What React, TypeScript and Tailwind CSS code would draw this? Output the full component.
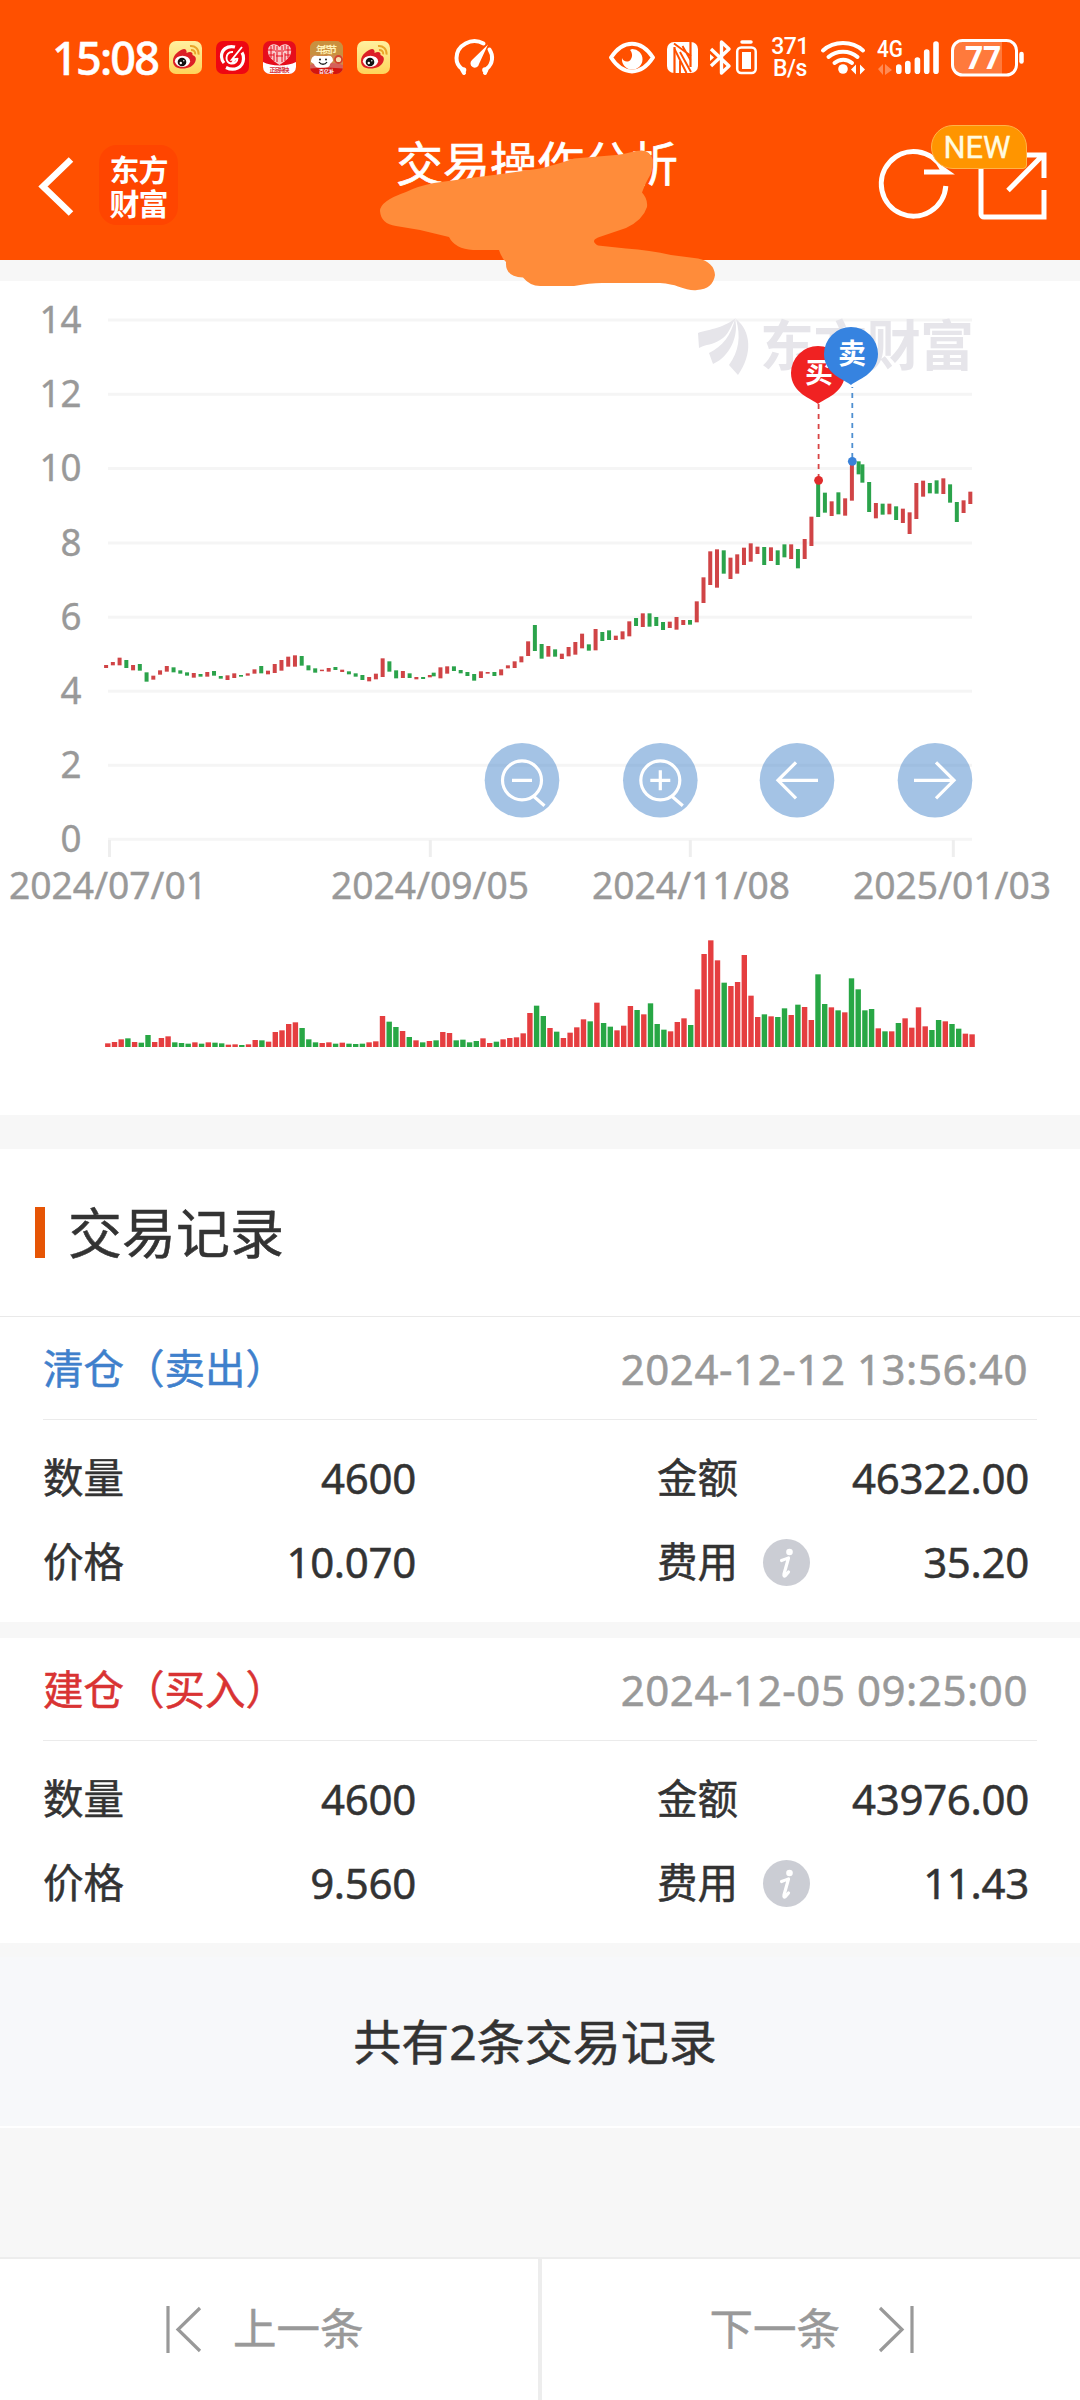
import React from "react";

/* Candles: colour, top, bottom (px inside the chart area) */
const CANDLES_A =
  "r195-204 r186-196 r173-196 g180-204 r195-211 g192-212 g217-245 r227-239 r211-224 r198-215 g202-217 g211-221 g217-227 r219-233 g222-230 r216-230 g213-227 g228-236 r226-240 r220-234 g225-230 r220-227 r208-221 g198-220 r212-223 r192-219 r180-212 r170-200 r166-200 g168-197 g196-211 g205-218 r209-212 r204-215 g201-210 r209-216 g214-223 g220-230 g225-240 r231-244 r221-238 r175-231 g184-215 g211-235 r213-234 g220-234 r231-238 g231-237 r225-232";
const CANDLES_B =
  "g458-469 r442-475 r439-461 g439-453 g450-460 g456-468 g462-482 r454-474 r456-461 g456-468 r448-466 r436-445 r424-444 r409-427 r364-408 g315-393 g372-416 r378-410 g388-410 r401-417 r381-409 r366-404 r341-385 g373-392 r327-391 g336-363 g331-360 r347-360 r334-358 r304-349 g294-318 r280-321 g280-320 g291-318 g306-330 r305-324 r291-329 r300-315 g300-314 r244-307 r172-249 r94-195 r88-203 g91-161";
const CANDLES_C =
  "r773-837 r763-821 r743-795 r730-785 r740-762 g741-795 r742-783 g751-795 g733-772 r733-777 g747-805 r717-777 r650-738 g545-651 g578-638 r604-648 g577-643 r595-647 r485-602 g484-523";
const CANDLES_D =
  "g493-548 g546-636 r609-655 g611-644 r611-643 g619-660 r626-669 r637-702 r549-657 r542-590 g549-580 g541-581 r535-582 g553-608 g606-666 r601-639 r575-612";

const SEGMENTS = [
  { x: 106.1, y: 600, data: CANDLES_A },
  { x: 433.7, y: 520, data: CANDLES_B },
  { x: 433.7 + 44 * 6.745, y: 300, data: CANDLES_C },
  { x: 862.4, y: 300, data: CANDLES_D },
];

const candles = SEGMENTS.flatMap((s) =>
  s.data.split(" ").map((c, i) => {
    const [top, bottom] = c.slice(1).split("-").map(Number);
    return {
      up: c[0] === "r",
      x: s.x + i * 6.745,
      y: s.y + top / 3,
      h: Math.max(1.5, (bottom - top) / 3),
    };
  })
);

const VOLUME_TOPS = [
  370, 366, 358, 355, 366, 368, 345, 366, 354, 349, 367, 369, 371, 367, 371, 367, 368, 370, 374, 373,
  375, 373, 360, 361, 365, 336, 331, 312, 307, 324, 358, 367, 369, 367, 371, 368, 371, 372, 371, 367,
  364, 288, 305, 321, 333, 351, 361, 367, 363, 361, 336, 339, 361, 359, 367, 363, 355, 369, 365, 358,
  354, 352, 340, 279, 257, 288, 324, 335, 354, 338, 322, 298, 304, 248, 309, 320, 331, 317, 258, 270,
  283, 250, 312, 329, 334, 306, 295, 315, 208, 102, 61, 121, 188, 198, 186, 105, 227, 291, 283, 289,
  291, 265, 285, 254, 261, 300, 163, 252, 262, 271, 277, 175, 208, 271, 267, 325, 334, 334, 309, 295,
  323, 262, 319, 330, 300, 304, 312, 326, 341, 343,
];

const GRID = [320, 394.3, 468.5, 543, 617.2, 691.2, 765.3, 839.3];
const RED = "#d04446";
const GREEN = "#2ba34b";
const GREY_TEXT = "#999999";

const latin = "'Noto Sans', 'Noto Sans CJK SC', sans-serif";

function Icon({
  x,
  y,
  w,
  h,
  className = "",
  children,
}: {
  x: number;
  y: number;
  w: number;
  h: number;
  className?: string;
  children: React.ReactNode;
}) {
  return (
    <svg
      width={w}
      height={h}
      viewBox={`${x} ${y} ${w} ${h}`}
      className={`block shrink-0 overflow-visible ${className}`}
      fill="none"
      stroke="none"
    >
      {children}
    </svg>
  );
}

function Weibo() {
  return (
    <Icon x={0} y={0} w={33} h={33}>
      <defs>
        <linearGradient id="wb" x1="0" y1="0" x2="0" y2="1">
          <stop offset="0" stopColor="#fff0a0" />
          <stop offset="1" stopColor="#ffd45a" />
        </linearGradient>
      </defs>
      <rect width="33" height="33" rx="7" fill="url(#wb)" />
      <path
        d="M4 20C4 14 10 9 15 8c2 0 3 2 2.500 4 3-1.500 6.500-1.500 6 2 3 1 4 3 3 6-1.500 5-7 7.500-13 7.500S4 25 4 20z"
        fill="#dc1f26"
      />
      <ellipse cx="13.500" cy="20.300" rx="7.600" ry="5.600" fill="#fff" />
      <circle cx="13" cy="21" r="4.300" fill="#111" />
      <circle cx="11.800" cy="22" r="1.200" fill="#fff" />
      <circle cx="14.800" cy="19.800" r=".7" fill="#fff" />
      <path d="M21 5c5-.6 9 3 8.600 8.600M22 9c2.500-.2 4.500 1.500 4.200 4.300" stroke="#eaa52a" strokeWidth="1.900" />
    </Icon>
  );
}

function AppIcons() {
  return (
    <div className="ml-3 flex items-center gap-[14px]">
      <Weibo />
      <Icon x={0} y={0} w={33} h={33}>
        <rect width="33" height="33" rx="7" fill="#ee0712" />
        <path d="M19 6C11 4 5 9 5.500 16c.2 2.500 1.200 4.500 2.500 6M10 26.500c8 4 17 .5 17.500-8.500.2-3-.5-5-1.500-6.500" stroke="#fff" strokeWidth="3.200" />
        <path d="M17 11c-4.500-.5-6.500 3-6.500 6 0 3 2 5 4.500 5.500 4 .5 6.500-2 6.500-5.500M26 6L16 18.500l3.500-.5-4 4.500" stroke="#fff" strokeWidth="1.900" />
      </Icon>
      <Icon x={0} y={0} w={33} h={33}>
        <clipPath id="heart-app">
          <rect width="33" height="33" rx="7" />
        </clipPath>
        <g clipPath="url(#heart-app)">
          <rect width="33" height="33" fill="#e60d1c" />
          <path d="M0 21c8 4.500 25 4.500 33 0v12H0z" fill="#fff" />
          <path d="M16.500 24C8 19 4 14 5 8.500 6 3 13 1.500 16.500 6 20 1.500 27 3 28 8.500 29 14 25 19 16.500 24z" fill="#f9c9cb" />
          <path
            d="M8 5v12M11 4v6M11 12v8M14 5v4M14 11v10M19 5v4M19 11v10M22 4v6M22 12v8M25 5v12M5 9h5M12 10h9M23 9h5M6 14h5M13 15h7M22 14h5"
            stroke="#e60d1c"
            strokeWidth="1"
          />
          <text x="16.500" y="30.500" fontSize="6" fontWeight="700" textAnchor="middle" fill="#d6333c" fontFamily={latin} textLength="20">
            正品特快
          </text>
        </g>
      </Icon>
      <Icon x={0} y={0} w={33} h={33}>
        <clipPath id="dog-app">
          <rect width="33" height="33" rx="7" />
        </clipPath>
        <g clipPath="url(#dog-app)">
          <rect width="33" height="33" fill="#cf8a4c" />
          <path d="M0 0h33v14H0z" fill="#c9903f" />
          <path d="M0 24c8-3 25-3 33 0v9H0z" fill="#d5605a" />
          <text x="16.500" y="11.500" fontSize="9.500" fontWeight="700" textAnchor="middle" fill="#fff2b8" fontFamily={latin} textLength="21">
            年货节
          </text>
          <path d="M1 21c0-5 3-7 6-6h10c4-1 6 1 6 5l-3 3c0 3-3 4-8 4s-7-1-8-4z" fill="#fff" />
          <circle cx="10" cy="18.500" r="1" fill="#222" />
          <circle cx="16" cy="18.500" r="1" fill="#222" />
          <path d="M9 21c2 3 6 3 8 0" stroke="#222" strokeWidth="1.300" />
          <circle cx="28.500" cy="18.500" r="3.500" fill="#f6dfb0" stroke="#d2422f" strokeWidth="1.800" />
          <path d="M0 27.500c9-1 24-1 33 0V33H0z" fill="#d3150f" />
          <text x="16.500" y="32.300" fontSize="5" fontWeight="700" textAnchor="middle" fill="#fff" fontFamily={latin} textLength="15">
            百亿补
          </text>
        </g>
      </Icon>
      <Weibo />
    </div>
  );
}

function StatusBar() {
  return (
    <div className="flex h-[115px] items-center pl-[52px] text-white">
      <span className="w-[105px] whitespace-nowrap font-['Noto_Sans'] text-[45px] font-medium leading-none tracking-[-1.8px] [-webkit-text-stroke:0.5px]">
        15:08
      </span>
      <AppIcons />
      <Icon x={454} y={40} w={41} h={35} className="ml-[64px]">
        <path d="M464 73l-2.500-4.500C457 65 456.500 61 456.500 58a18 17 0 0 1 27-14.500M489.500 49.500c4 6 3.500 14-2.500 19L485 73" stroke="#fff" strokeWidth="4" strokeLinecap="round" strokeLinejoin="round" />
        <circle cx="463.500" cy="70" r="2.800" fill="#fff" />
        <circle cx="485" cy="70" r="2.800" fill="#fff" />
        <path d="M472 60L488 44.500 479 64a4.300 4.300 0 1 1-7-4z" fill="#fff" />
      </Icon>

      <Icon x={609} y={40} w={46} h={35} className="ml-[114px]">
        <path d="M611 57.500C623 39 641 39 653 57.500 641 76 623 76 611 57.500z" stroke="#fff" strokeWidth="4" strokeLinejoin="round" />
        <path d="M632 49a10.300 10.300 0 1 1-10 9c1 4 7 5 9 1 2-3 1-7-1-9z" fill="#fff" />
      </Icon>
      <Icon x={667} y={40} w={31} h={35} className="ml-3">
        <rect x="667" y="42" width="31" height="31" rx="7" fill="#fff" />
        <path d="M674.500 47V73M690.500 42V67" stroke="#ff5000" strokeWidth="2.200" />
        <path d="M674 43.500L691 56M680 52l11 20M674.500 49l12 24M680 61v12M690.500 60l-8-14" stroke="#ff5000" strokeWidth="1.900" />
      </Icon>
      <Icon x={710} y={40} w={22} h={35} className="ml-3">
        <path d="M711 49l18 17-7.500 7V42l7.500 7-18 17" stroke="#fff" strokeWidth="3.400" strokeLinejoin="round" />
        <path d="M710 54l4 3.500-4 3.500z" fill="#fff" />
      </Icon>
      <Icon x={736} y={40} w={21} h={35} className="ml-1">
        <path d="M742 42h9" stroke="#fff" strokeWidth="3.500" strokeLinecap="round" />
        <rect x="737.200" y="47.500" width="18.500" height="25.500" rx="4" stroke="#fff" strokeWidth="2.500" />
        <rect x="742" y="52" width="9" height="17" fill="#fff" />
      </Icon>
      <div className="ml-[14px] flex w-[38px] flex-col items-center font-[Roboto] text-[23px] font-medium leading-[22px] tracking-[-0.5px]">
        <span>371</span>
        <span>B/s</span>
      </div>
      <Icon x={821} y={40} w={44} h={35} className="ml-3">
        <path d="M823 50.500c11-10 29-10 40 0M828.500 57c8-7 21-7 29 0M834.500 63c5-4.500 12.500-4.500 17.500 0" stroke="#fff" strokeWidth="4" strokeLinecap="round" />
        <circle cx="843" cy="69" r="4.800" fill="#fff" />
        <path d="M851 69.500l5-5v10zM865 69.500l-5-5v10z" fill="#fff" />
      </Icon>
      <Icon x={877} y={38} w={62} h={37} className="ml-3">
        <text x="877" y="56" fill="#fff" fontSize="23" fontWeight="500" fontFamily="Roboto" textLength="26" lengthAdjust="spacingAndGlyphs">
          4G
        </text>
        <path d="M878 68l5-5v11M885 63v11l7-5z" fill="#ff8a55" />
        <path d="M898.800 66v4.300M907.800 62.500v7.800M917.400 59v11.300M926.700 51v19.300M936 43v27.300" stroke="#fff" strokeWidth="5.600" strokeLinecap="round" />
      </Icon>
      <Icon x={951} y={38} w={74} h={37} className="ml-3">
        <path d="M961 41h41v32h-41a8 8 0 0 1-7-8V49a8 8 0 0 1 7-8z" fill="#ff7a3c" />
        <rect x="952.500" y="39.500" width="64" height="34.500" rx="10" stroke="#fff" strokeWidth="3" />
        <path d="M1021.500 53v7.500" stroke="#fff" strokeWidth="4.500" strokeLinecap="round" />
        <text x="965" y="68" fill="#fff" fontSize="32" fontWeight="700" fontFamily="'Noto Sans'" textLength="36" lengthAdjust="spacingAndGlyphs">
          77
        </text>
      </Icon>
    </div>
  );
}

function Header() {
  return (
    <header className="relative h-[260px] bg-[#ff5000]">
      <StatusBar />
      <div className="flex h-[145px] items-start pl-10">
        <Icon x={40} y={155} w={34} h={62} className="mt-10">
          <path d="M71 159.500L43 186.500 71 213.500" stroke="#fff" strokeWidth="6.500" />
        </Icon>
        <div className="ml-[25px] mt-[30px] flex h-20 w-[79px] flex-col items-center justify-center rounded-[18px] bg-[#ff4500] font-['Noto_Sans_CJK_SC'] text-[30px] font-bold leading-[34px] tracking-[-1px] text-white">
          <span>东方</span>
          <span>财富</span>
        </div>
        <h1 className="ml-[218px] mt-[12px] font-['Noto_Sans_CJK_SC'] text-[47px] font-normal leading-[68px] text-white [-webkit-text-stroke:0.7px]">
          交易操作分析
        </h1>
        <div className="relative ml-[201px] mt-[10px]">
          <Icon x={878} y={125} w={168} h={96}>
            <path d="M944.800 186A32.300 32.300 0 1 1 941 168.500L946 172H923" stroke="#fff" strokeWidth="5" />
            <path d="M1010 155h33v23M980 160v54a3 3 0 0 0 3 3h60v-27M1007 190.500L1042 155" stroke="#fff" strokeWidth="5" />
          </Icon>
          <span className="absolute left-[52px] top-0 flex h-11 w-[96px] items-center justify-center rounded-[22px] rounded-br-sm border border-[#ffb347] bg-[#ff9500] pr-1 font-[Roboto] text-[31px] leading-none text-[#fffbe0] [-webkit-text-stroke:0.3px]">
            NEW
          </span>
        </div>
      </div>
      <svg viewBox="370 140 360 160" width="360" height="160" className="absolute left-[370px] top-[140px] z-10">
        <path
          d="M540 168.500Q510 173 482 176.500T434 183Q418 186 406 192 380 201 380 211 381 224 396 226L420 230 449 237Q455 249 473 250H499Q502 259 506 262 505 277 523 277.500 530 286 540 286H574Q590 283 602 283H660Q672 284 678 286.500 690 291 697 290 713 289 715 275 714 262 698 258.500L671 255Q650 250 626 248.500L598 245.500Q590 241 598 237.500L626 228Q643 220 647 207 648 199 642 192.500 645 184 648 179 653 172 653 160 650 148 636 151 625 154 616 155L574 158.500Q555 165 540 168.500z"
          fill="#ff8c3a"
        />
      </svg>
    </header>
  );
}

function Pin({ x, y, color, label }: { x: number; y: number; color: string; label: string }) {
  return (
    <g>
      <path
        d={`M${x} ${y + 31}C${x - 6} ${y + 26} ${x - 27} ${y + 20} ${x - 27} ${y}A27 27 0 0 1 ${x + 27} ${y}C${x + 27} ${y + 20} ${x + 6} ${y + 26} ${x} ${y + 31}z`}
        fill={color}
      />
      <text x={x + 1} y={y + 10} fontSize="28" fontWeight="700" textAnchor="middle" fill="#fff" fontFamily="'Noto Sans CJK SC', sans-serif">
        {label}
      </text>
    </g>
  );
}

function RoundButton({ cx, children }: { cx: number; children: React.ReactNode }) {
  return (
    <g transform={`translate(${cx} 780.300)`} stroke="#fff" strokeWidth="3.200" fill="none">
      <circle r="37.300" fill="#4a88cc" fillOpacity=".5" stroke="none" />
      {children}
    </g>
  );
}

function Chart() {
  const dates = [
    { t: "2024/07/01", x: 9 },
    { t: "2024/09/05", x: 331 },
    { t: "2024/11/08", x: 592 },
    { t: "2025/01/03", x: 853 },
  ];
  return (
    <svg viewBox="0 281 1080 834" width="1080" height="834" className="block bg-white">
      {GRID.map((y) => (
        <rect key={y} x="108" y={y - 1.5} width="864" height="3" fill="#f5f5f5" />
      ))}
      {[109.5, 430.3, 690.3, 953.3].map((x) => (
        <rect key={x} x={x - 1.5} y="840" width="3" height="17" fill="#eeeeee" />
      ))}
      {GRID.map((y, i) => (
        <text
          key={i}
          x="81.500"
          y={y + 12.5}
          textAnchor="end"
          fontSize="38"
          fill={GREY_TEXT}
          stroke={GREY_TEXT}
          strokeWidth=".4"
          fontFamily={latin}
          textLength={i < 3 ? 42 : 21}
          lengthAdjust="spacingAndGlyphs"
        >
          {14 - i * 2}
        </text>
      ))}
      {dates.map((d) => (
        <text key={d.t} x={d.x} y="898.500" fontSize="38.500" fill={GREY_TEXT} stroke={GREY_TEXT} strokeWidth=".4" fontFamily={latin} textLength="198" lengthAdjust="spacingAndGlyphs">
          {d.t}
        </text>
      ))}

      <g fill="#e6e5ea">
        <path d="M698 333c10-4 22-3 38-15-6 8-6 16-16 22-7 5-14 4-21 8z" />
        <path d="M735 319c4 15-4 37-22 45l-4-11c14-7 22-18 26-34z" />
        <path d="M736 319c15 12 17 35 2 56l-9-10c10-14 12-28 7-46z" />
        <text x="760" y="366" fontSize="54" fontWeight="700" fontFamily="'Noto Sans CJK SC', sans-serif" textLength="214">
          东方财富
        </text>
      </g>

      {candles.map((c, i) => (
        <rect key={i} x={c.x - 2} y={c.y} width="4" height={c.h} fill={c.up ? RED : GREEN} />
      ))}
      {VOLUME_TOPS.map((t, i) => (
        <rect
          key={i}
          x={105.1 + i * 6.7}
          y={920 + t / 3}
          width="5.400"
          height={(381 - t) / 3}
          fill={i === 111 || !candles[i].up ? "#28a745" : "#e53e40"}
        />
      ))}

      <path d="M818.600 404V478" stroke="#d84444" strokeWidth="1.800" strokeDasharray="5 5" />
      <path d="M852.300 387V459" stroke="#4f8fd0" strokeWidth="1.800" strokeDasharray="5 5" strokeDashoffset="-6" />
      <circle cx="818.600" cy="480.300" r="4.400" fill="#e02c2c" />
      <circle cx="852.300" cy="461.300" r="4.400" fill="#3a82d8" />
      <Pin x={818} y={373} color="#f02222" label="买" />
      <Pin x={851} y={354} color="#3683e0" label="卖" />

      <RoundButton cx={522}>
        <circle r="19.500" />
        <path d="M-10 0H10M11.500 16L22.500 25.500" />
      </RoundButton>
      <RoundButton cx={660.300}>
        <circle r="19.500" />
        <path d="M-10 0H10M0-10V10M11.500 16L22.500 25.500" />
      </RoundButton>
      <RoundButton cx={797}>
        <path d="M21 0H-18M-1-18L-19 0-1 18" />
      </RoundButton>
      <RoundButton cx={935}>
        <path d="M-21 0H18M1-18L19 0 1 18" />
      </RoundButton>
    </svg>
  );
}

function Cell({ label, value, info }: { label: string; value: string; info?: boolean }) {
  return (
    <div className="flex h-[84px] items-center">
      <span className="text-[40.500px]">{label}</span>
      {info && (
        <span className="ml-[25px] flex size-[47px] items-center justify-center rounded-full bg-[#cbcdd4]">
          <Icon x={0} y={0} w={47} h={47}>
            <circle cx="26.500" cy="13" r="3.300" fill="#fff" />
            <path d="M18.500 21.500q4-1.500 7-2.500l-4.500 16q-.5 3 1.500 1.500l3-3.500" stroke="#fff" strokeWidth="3.200" strokeLinecap="round" strokeLinejoin="round" />
          </Icon>
        </span>
      )}
      <span className="ml-auto text-[42px] tracking-[-0.3px]">{value}</span>
    </div>
  );
}

type Trade = { title: string; tone: string; time: string; amount: string; price: string; total: string; fee: string };

function TradeCard({ trade }: { trade: Trade }) {
  return (
    <section className="h-[305px] bg-white pl-[43px] pr-[43px] text-[#333333]">
      <div className="flex h-[103px] items-center justify-between border-b border-[#ebebeb] pr-[9px]">
        <span className={`pt-[2px] text-[40.500px] ${trade.tone}`}>{trade.title}</span>
        <span className="pt-px text-[42px] tracking-[0.55px] text-[#999999]">{trade.time}</span>
      </div>
      <div className="grid grid-cols-[373px_372px] justify-between pr-2 pt-4">
        <Cell label="数量" value={trade.amount} />
        <Cell label="金额" value={trade.total} />
        <Cell label="价格" value={trade.price} />
        <Cell label="费用" value={trade.fee} info />
      </div>
    </section>
  );
}

const TRADES: Trade[] = [
  { title: "清仓（卖出）", tone: "text-[#3f80cc]", time: "2024-12-12 13:56:40", amount: "4600", price: "10.070", total: "46322.00", fee: "35.20" },
  { title: "建仓（买入）", tone: "text-[#d93333]", time: "2024-12-05 09:25:00", amount: "4600", price: "9.560", total: "43976.00", fee: "11.43" },
];

export default function App() {
  return (
    <div className="flex h-[2400px] w-[1080px] flex-col overflow-hidden bg-[#f7f7f7] font-['Noto_Sans','Noto_Sans_CJK_SC',sans-serif] leading-none">
      <Header />
      <div className="h-[21px]" />
      <Chart />
      <main className="flex flex-1 flex-col pt-[34px] [-webkit-text-stroke:0.5px]">
        <div className="flex h-[168px] items-center border-b border-[#e9e9e9] bg-white pl-[35px]">
          <span className="h-[51px] w-[10px] bg-[#e65505]" />
          <h2 className="ml-[23px] text-[54px] text-[#333333]">交易记录</h2>
        </div>
        <TradeCard trade={TRADES[0]} />
        <div className="h-4" />
        <TradeCard trade={TRADES[1]} />
        <div className="h-[14px]" />
        <div className="flex h-[171px] items-center justify-center border-b-2 border-white bg-[#f7f8fa] pr-[10px] text-[48px] text-[#333333]">
          共有2条交易记录
        </div>
        <footer className="mt-auto flex h-[143px] border-t-2 border-[#ededed] bg-white text-[43.500px] text-[#999999]">
          <div className="flex h-[139px] flex-1 items-center pl-[166px]">
            <Icon x={166} y={2304} w={36} h={48}>
              <path d="M168 2305v47M200 2307L178 2328.500 200 2350" stroke="#999" strokeWidth="3.200" />
            </Icon>
            <span className="ml-[31px]">上一条</span>
          </div>
          <div className="w-1 bg-[#ededed]" />
          <div className="flex h-[139px] flex-1 items-center justify-end pr-[166px]">
            <span className="mr-[39px]">下一条</span>
            <Icon x={879} y={2304} w={35} h={48}>
              <path d="M912 2305v47M880 2307L902 2328.500 880 2350" stroke="#999" strokeWidth="3.200" />
            </Icon>
          </div>
        </footer>
      </main>
    </div>
  );
}
